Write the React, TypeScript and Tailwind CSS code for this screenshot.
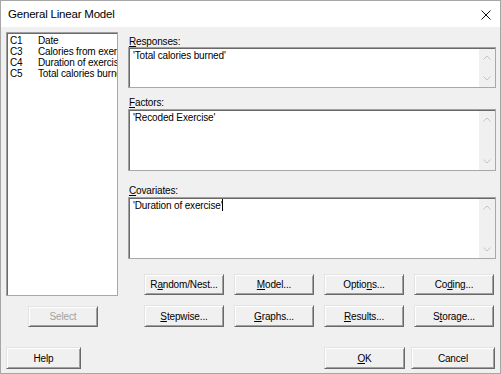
import React from "react";

const FONT = { fontFamily: '"Liberation Sans", Arial, sans-serif' };

function U({ children }: { children: React.ReactNode }) {
  return <span className="underline underline-offset-[1px] decoration-[1px]">{children}</span>;
}

function Btn({
  children,
  className = "",
  disabled = false,
}: {
  children: React.ReactNode;
  className?: string;
  disabled?: boolean;
}) {
  return (
    <div
      className={`flex items-center justify-center bg-[#f0f0f0] border border-t-[#e3e3e3] border-l-[#e3e3e3] border-r-[#696969] border-b-[#696969] shadow-[inset_1px_1px_0_#ffffff,inset_-1px_-1px_0_#a0a0a0] text-[10px] tracking-[-0.15px] leading-[11px] ${
        disabled ? "text-[#a0a0a0]" : "text-black"
      } ${className}`}
    >
      {children}
    </div>
  );
}

function Chevron({ up }: { up: boolean }) {
  return (
    <svg width="8" height="5" viewBox="0 0 8 5">
      <polyline
        points={up ? "0.5,4.5 4,1 7.5,4.5" : "0.5,0.5 4,4 7.5,0.5"}
        fill="none"
        stroke="#c4c4c4"
        strokeWidth="1"
      />
    </svg>
  );
}

function TextBox({ className = "", children }: { className?: string; children?: React.ReactNode }) {
  return (
    <div
      className={`flex border border-t-[#a0a0a0] border-l-[#a0a0a0] border-r-[#a8a8a8] border-b-[#a8a8a8] bg-white shadow-[inset_1px_1px_0_#696969] ${className}`}
    >
      <div className="flex-1 pl-[4px] pt-[2px] text-[10px] tracking-[-0.15px] leading-[11px] text-black">
        {children}
      </div>
      <div className="w-[16px] mt-[1px] bg-[#f0f0f0] flex flex-col justify-between">
        <div className="h-[17px] flex items-center justify-center">
          <Chevron up />
        </div>
        <div className="h-[17px] flex items-center justify-center">
          <Chevron up={false} />
        </div>
      </div>
    </div>
  );
}

const items = [
  ["C1", "Date"],
  ["C3", "Calories from exercise"],
  ["C4", "Duration of exercise"],
  ["C5", "Total calories burned"],
];

export default function App() {
  return (
    <div
      style={FONT}
      className="w-[501px] h-[374px] border border-[#a6a6a6] bg-[#f0f0f0] flex flex-col overflow-hidden"
    >
      {/* Title bar */}
      <div className="h-[26px] bg-white flex items-center justify-between pl-[7px] pr-[9px]">
        <span className="text-[11.5px] tracking-[-0.2px] text-black pt-[1px]">General Linear Model</span>
        <svg width="10" height="10" viewBox="0 0 10 10" className="mt-[1px]">
          <path d="M0.5 0.5 L9.5 9.5 M9.5 0.5 L0.5 9.5" stroke="#111" strokeWidth="1" />
        </svg>
      </div>

      {/* Body */}
      <div className="flex pl-[5px] pt-[5px]">
        {/* Left column */}
        <div className="flex flex-col w-[112px]">
          <div className="h-[264px] border border-t-[#a0a0a0] border-l-[#a0a0a0] border-r-[#a8a8a8] border-b-[#a8a8a8] bg-white shadow-[inset_1px_1px_0_#696969] pt-[2px] pl-[3px] overflow-hidden">
            {items.map(([c, n]) => (
              <div key={c} className="flex h-[11px] text-[10px] tracking-[-0.15px] leading-[11px] text-black whitespace-nowrap">
                <span className="w-[28px] shrink-0">{c}</span>
                <span>{n}</span>
              </div>
            ))}
          </div>
          <Btn disabled className="mt-[10px] ml-[22px] w-[70px] h-[21px]">
            Select
          </Btn>
        </div>

        {/* Right column */}
        <div className="ml-[10px] w-[368px] flex flex-col">
          <div className="h-[15px] pt-[4px] pl-[1px] text-[10px] tracking-[-0.15px] leading-[11px] text-black">
            <U>R</U>esponses:
          </div>
          <TextBox className="h-[41px]">'Total calories burned'</TextBox>
          <div className="h-[21px] pt-[9px] pl-[1px] text-[10px] tracking-[-0.15px] leading-[11px] text-black">
            <U>F</U>actors:
          </div>
          <TextBox className="h-[62px]">'Recoded Exercise'</TextBox>
          <div className="h-[26px] pt-[14px] pl-[1px] text-[10px] tracking-[-0.15px] leading-[11px] text-black">
            <U>C</U>ovariates:
          </div>
          <TextBox className="h-[62px]">
            <span>
              'Duration of exercise'
              <span className="inline-block w-[1px] h-[12px] bg-black align-middle ml-[0px] -mt-[2px]" />
            </span>
          </TextBox>

          <div className="flex gap-[10px] pl-[16px] mt-[15px]">
            <Btn className="w-[80px] h-[21px]">
              R<U>a</U>ndom/Nest...
            </Btn>
            <Btn className="w-[80px] h-[21px]">
              <U>M</U>odel...
            </Btn>
            <Btn className="w-[80px] h-[21px]">
              Optio<U>n</U>s...
            </Btn>
            <Btn className="w-[80px] h-[21px]">
              Co<U>d</U>ing...
            </Btn>
          </div>
          <div className="flex gap-[10px] pl-[16px] mt-[10px]">
            <Btn className="w-[80px] h-[22px]">
              <U>S</U>tepwise...
            </Btn>
            <Btn className="w-[80px] h-[22px]">
              <U>G</U>raphs...
            </Btn>
            <Btn className="w-[80px] h-[22px]">
              <U>R</U>esults...
            </Btn>
            <Btn className="w-[80px] h-[22px]">
              S<U>t</U>orage...
            </Btn>
          </div>
        </div>
      </div>

      {/* Bottom row */}
      <div className="flex pl-[5px] mt-[20px]">
        <Btn className="w-[75px] h-[22px]">Help</Btn>
        <Btn className="ml-[243px] w-[81px] h-[22px]">
          <U>O</U>K
        </Btn>
        <Btn className="ml-[6px] w-[84px] h-[22px]">Cancel</Btn>
      </div>
    </div>
  );
}
